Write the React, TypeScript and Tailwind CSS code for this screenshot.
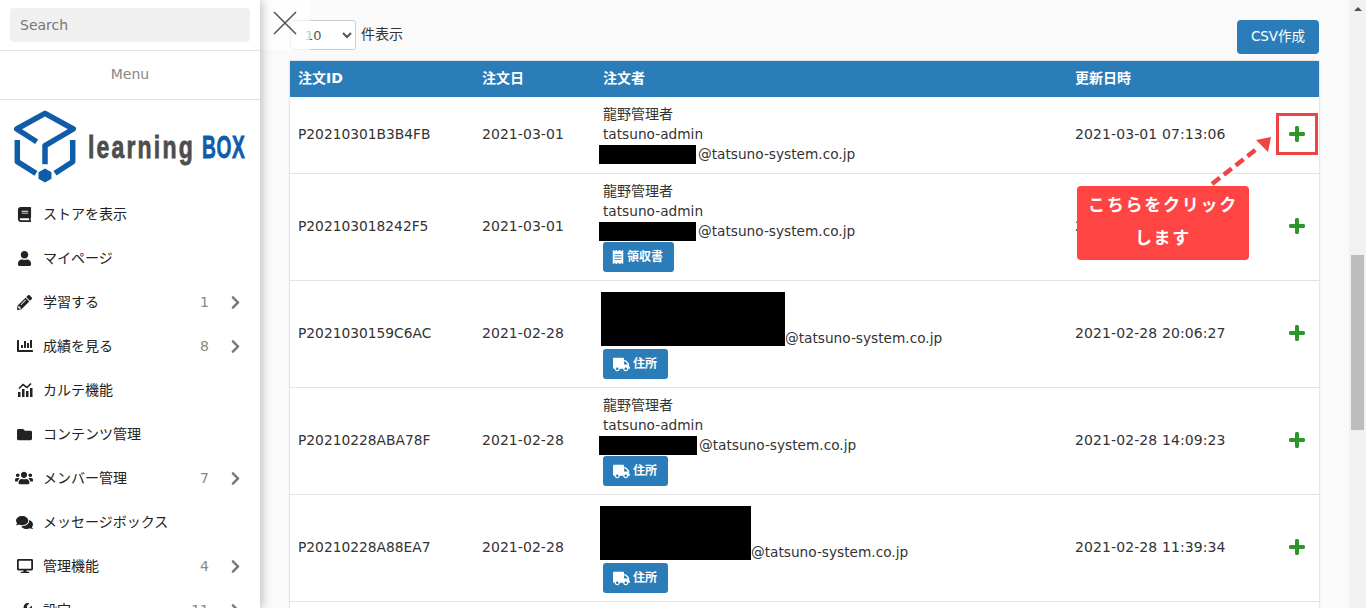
import { FaBook, FaChartBar, FaChevronRight, FaComments, FaDesktop, FaFolder, FaPencilAlt, FaReceipt, FaTruck, FaUser, FaUsers, FaWrench } from 'react-icons/fa'
import type { ReactNode } from 'react'

const FONT = "font-['DejaVu_Sans','Noto_Sans_CJK_JP',sans-serif]"

function KarteIcon() {
  return (
    <svg viewBox="0 0 16 16" className="h-[16px] w-[16px]" fill="currentColor">
      <rect x="1" y="10" width="2.5" height="5" />
      <rect x="5" y="7" width="2.5" height="8" />
      <rect x="9" y="9" width="2.5" height="6" />
      <rect x="13" y="6" width="2.5" height="9" />
      <path d="M2 6.5 6 2.5 10 5.5 14 1.5" fill="none" stroke="currentColor" strokeWidth="1.6" />
    </svg>
  )
}

function PlusIcon() {
  return (
    <svg viewBox="0 0 16 16" className="ml-[27px] h-[16px] w-[16px]" fill="#2e962e">
      <path d="M6 1.5C6 .7 6.7 0 7.5 0h1c.8 0 1.5.7 1.5 1.5V6h4.500c.8 0 1.500.7 1.500 1.500v1c0 .8-.7 1.500-1.500 1.500H10v4.500c0 .8-.7 1.500-1.500 1.500h-1C6.700 16 6 15.300 6 14.500V10H1.500C.7 10 0 9.300 0 8.500v-1C0 6.700.7 6 1.500 6H6z" />
    </svg>
  )
}

const menu: { icon: ReactNode; label: string; count?: number }[] = [
  { icon: <FaBook />, label: 'ストアを表示' },
  { icon: <FaUser />, label: 'マイページ' },
  { icon: <FaPencilAlt />, label: '学習する', count: 1 },
  { icon: <FaChartBar className="text-[16px]" />, label: '成績を見る', count: 8 },
  { icon: <KarteIcon />, label: 'カルテ機能' },
  { icon: <FaFolder />, label: 'コンテンツ管理' },
  { icon: <FaUsers className="-ml-[2px] text-[18px]" />, label: 'メンバー管理', count: 7 },
  { icon: <FaComments className="-ml-[1px] text-[17px]" />, label: 'メッセージボックス' },
  { icon: <FaDesktop className="text-[16px]" />, label: '管理機能', count: 4 },
  { icon: <FaWrench />, label: '設定', count: 11 },
]

function Logo() {
  return (
    <svg viewBox="0 100 260 92" className="block h-[92px] w-[260px]">
      <g fill="none" stroke="#0f5ca8" strokeWidth="5.5" strokeLinejoin="round">
        <path d="M36.7 141.700 16.700 129 45 113.300 73.300 129 45 145.700V164.300" />
        <path d="M17.300 140V161.700L36 173.300" />
        <path d="M72.700 140V161.700L55 173.300" />
      </g>
      <path d="M45 168.500 51.500 172.200V178.800L45 182.500 38.500 178.800V172.200Z" fill="#0f5ca8" />
      <text transform="translate(88 158) scale(0.72 1)" letterSpacing="3" stroke="#4d4d4d" strokeWidth="0.8" fontFamily="'Liberation Sans', sans-serif" fontWeight="700" fontSize="32" fill="#4d4d4d">learning</text>
      <text transform="translate(202 158) scale(0.6 1)" letterSpacing="1" stroke="#0f5ca8" strokeWidth="0.8" fontFamily="'Liberation Sans', sans-serif" fontWeight="700" fontSize="32" fill="#0f5ca8">BOX</text>
    </svg>
  )
}

function Sidebar() {
  return (
    <aside className="relative z-10 h-full w-[260px] shrink-0 overflow-hidden bg-white shadow-[2px_0_10px_rgba(0,0,0,0.25)]">
      <div className="h-[51px] border-b border-[#e3e3e3] px-[10px] pt-[8px]">
        <div className="flex h-[34px] items-center rounded-[4px] bg-[#f0f0f0] px-[10px] text-[14px] text-[#777]">Search</div>
      </div>
      <div className="flex h-[49px] items-center justify-center border-b border-[#e3e3e3] pb-[2px] text-[14px] text-[#888]">Menu</div>
      <Logo />
      <ul className="text-[14px] text-[#222]">
        {menu.map((m) => (
          <li key={m.label} className="flex h-[44px] items-center pl-[17px] pr-[17px]">
            <span className="flex w-[26px] text-[15px] text-[#222]">{m.icon}</span>
            <span className="flex-1">{m.label}</span>
            {m.count !== undefined && <span className="mr-[19px] text-[14px] text-[#8a8a7a]">{m.count}</span>}
            {m.count !== undefined && <FaChevronRight className="text-[15px] text-[#777]" />}
          </li>
        ))}
      </ul>
    </aside>
  )
}

function Black({ w, h = 19 }: { w: number; h?: number }) {
  return <span className="block shrink-0 bg-black" style={{ width: w, height: h }} />
}

function TruckBtn() {
  return (
    <button className="flex h-[30px] items-center gap-[3px] rounded-[3px] bg-[#2a7db8] pl-[10px] pr-[11px] text-[12px] font-bold text-white">
      <FaTruck className="text-[17px]" />
      住所
    </button>
  )
}

function ReceiptBtn() {
  return (
    <button className="flex h-[30px] items-center gap-[2px] rounded-[3px] bg-[#2a7db8] pl-[8px] pr-[11px] text-[12px] font-bold text-white">
      <FaReceipt className="text-[14px]" />
      領収書
    </button>
  )
}

function Named({ w }: { w: number }) {
  return (
    <>
      <div className="h-[20px] leading-[20px]">龍野管理者</div>
      <div className="h-[20px] text-[13.7px] leading-[20px]">tatsuno-admin</div>
      <div className="-ml-[4px] flex h-[20px] items-center leading-[20px]">
        <Black w={w} />
        <span className="ml-[2px] text-[13.7px]">@tatsuno-system.co.jp</span>
      </div>
    </>
  )
}

function Block({ w, shift }: { w: number; shift: string }) {
  return (
    <div className={`${shift} flex items-end pt-[4px]`}>
      <Black w={w} h={54} />
      <span className="mb-[-2px] text-[13.7px] leading-[20px]">@tatsuno-system.co.jp</span>
    </div>
  )
}

const rows: { id: string; date: string; updated: string; who: ReactNode }[] = [
  {
    id: 'P20210301B3B4FB',
    date: '2021-03-01',
    updated: '2021-03-01 07:13:06',
    who: (
      <div className="pb-[1px]">
        <Named w={97} />
      </div>
    ),
  },
  {
    id: 'P202103018242F5',
    date: '2021-03-01',
    updated: '2021-03-01 07:12:11',
    who: (
      <>
        <Named w={97} />
        <div className="pt-[1px]"><ReceiptBtn /></div>
      </>
    ),
  },
  {
    id: 'P2021030159C6AC',
    date: '2021-02-28',
    updated: '2021-02-28 20:06:27',
    who: (
      <>
        <Block w={184} shift="-ml-[2px]" />
        <div className="pt-[3px]"><TruckBtn /></div>
      </>
    ),
  },
  {
    id: 'P20210228ABA78F',
    date: '2021-02-28',
    updated: '2021-02-28 14:09:23',
    who: (
      <>
        <Named w={98} />
        <div className="pt-[1px]"><TruckBtn /></div>
      </>
    ),
  },
  {
    id: 'P20210228A88EA7',
    date: '2021-02-28',
    updated: '2021-02-28 11:39:34',
    who: (
      <>
        <Block w={151} shift="-ml-[3px]" />
        <div className="pt-[3px]"><TruckBtn /></div>
      </>
    ),
  },
]

export default function App() {
  return (
    <div className={`${FONT} flex h-[608px] w-[1366px] overflow-hidden bg-[#fafafa] text-[14px] text-[#333]`}>
      <Sidebar />
      <main className="relative flex-1 pl-[30px] pr-[30px]">
        <div className="flex h-[61px] items-start justify-between pt-[20px]">
          <div className="flex items-center gap-[5px]">
            <select className="h-[30px] w-[66px] rounded-[3px] border border-[#ccc] bg-white pl-[10px] text-[13px] text-[#555]">
              <option>10</option>
            </select>
            <span className="mb-[2px]">件表示</span>
          </div>
          <button className="h-[34px] w-[82px] rounded-[4px] bg-[#2a7db8] pb-[2px] text-[13.5px] text-white">CSV作成</button>
        </div>
        <table className="w-[1029px] table-fixed border-collapse bg-white shadow-[0_0_2px_rgba(0,0,0,0.25)]">
          <colgroup>
            <col className="w-[184px]" />
            <col className="w-[121px]" />
            <col className="w-[472px]" />
            <col className="w-[195px]" />
            <col />
          </colgroup>
          <thead>
            <tr className="h-[36px] bg-[#2a7db8] text-left text-[14px] font-bold text-white">
              <th className="pb-[2px] pl-[8px]">注文ID</th>
              <th className="pb-[2px] pl-[8px]">注文日</th>
              <th className="pb-[2px] pl-[8px]">注文者</th>
              <th className="pb-[2px] pl-[8px]">更新日時</th>
              <th />
            </tr>
          </thead>
          <tbody>
            {rows.map((r) => (
              <tr key={r.id} className="border-b border-[#e2e2e2]">
                <td className="pb-[2px] pl-[8px] text-[13.8px]">{r.id}</td>
                <td className="pb-[2px] pl-[8px] tracking-[0.05px]">{r.date}</td>
                <td className="pb-[8px] pl-[8px] pt-[7px]">{r.who}</td>
                <td className="pb-[2px] pl-[8px] tracking-[0.1px]">{r.updated}</td>
                <td className="pb-[2px]"><PlusIcon /></td>
              </tr>
            ))}
            <tr className="h-[60px]"><td colSpan={5} /></tr>
          </tbody>
        </table>
        {/* close button over the drawer edge */}
        <div className="absolute left-0 top-0 h-[50px] w-[50px] bg-white/70" />
        <svg className="absolute left-[13px] top-[11px] h-[24px] w-[24px]" viewBox="0 0 24 24" stroke="#555" strokeWidth="1.6">
          <path d="M1 1 23 23M23 1 1 23" />
        </svg>
        {/* annotation */}
        <div className="absolute left-[1016px] top-[113px] h-[42px] w-[42px] border-[3px] border-[#f04444]" />
        <svg className="absolute left-[940px] top-[130px] h-[60px] w-[80px]" viewBox="0 0 80 60">
          <path d="M12 54 L58 18" stroke="#f04444" strokeWidth="4.500" strokeDasharray="10 5" />
          <path d="M71 7 L56 10 L68 22 Z" fill="#f04444" />
        </svg>
        <div className="absolute left-[817px] top-[186px] flex h-[74px] w-[172px] flex-col items-center justify-center rounded-[4px] bg-[#ff4444] pb-[2px] text-[17px] font-bold leading-[33px] tracking-[1.75px] text-white">
          <span>こちらをクリック</span>
          <span>します</span>
        </div>
      </main>
      <div className="relative w-[17px] shrink-0 bg-[#f1f1f1]">
        <div className="absolute left-[5px] top-[7px] h-0 w-0 border-x-[4px] border-b-[4px] border-x-transparent border-b-[#505050]" />
        <div className="absolute left-[2px] top-[255px] h-[175px] w-[13px] bg-[#bdbdbd]" />
      </div>
    </div>
  )
}
